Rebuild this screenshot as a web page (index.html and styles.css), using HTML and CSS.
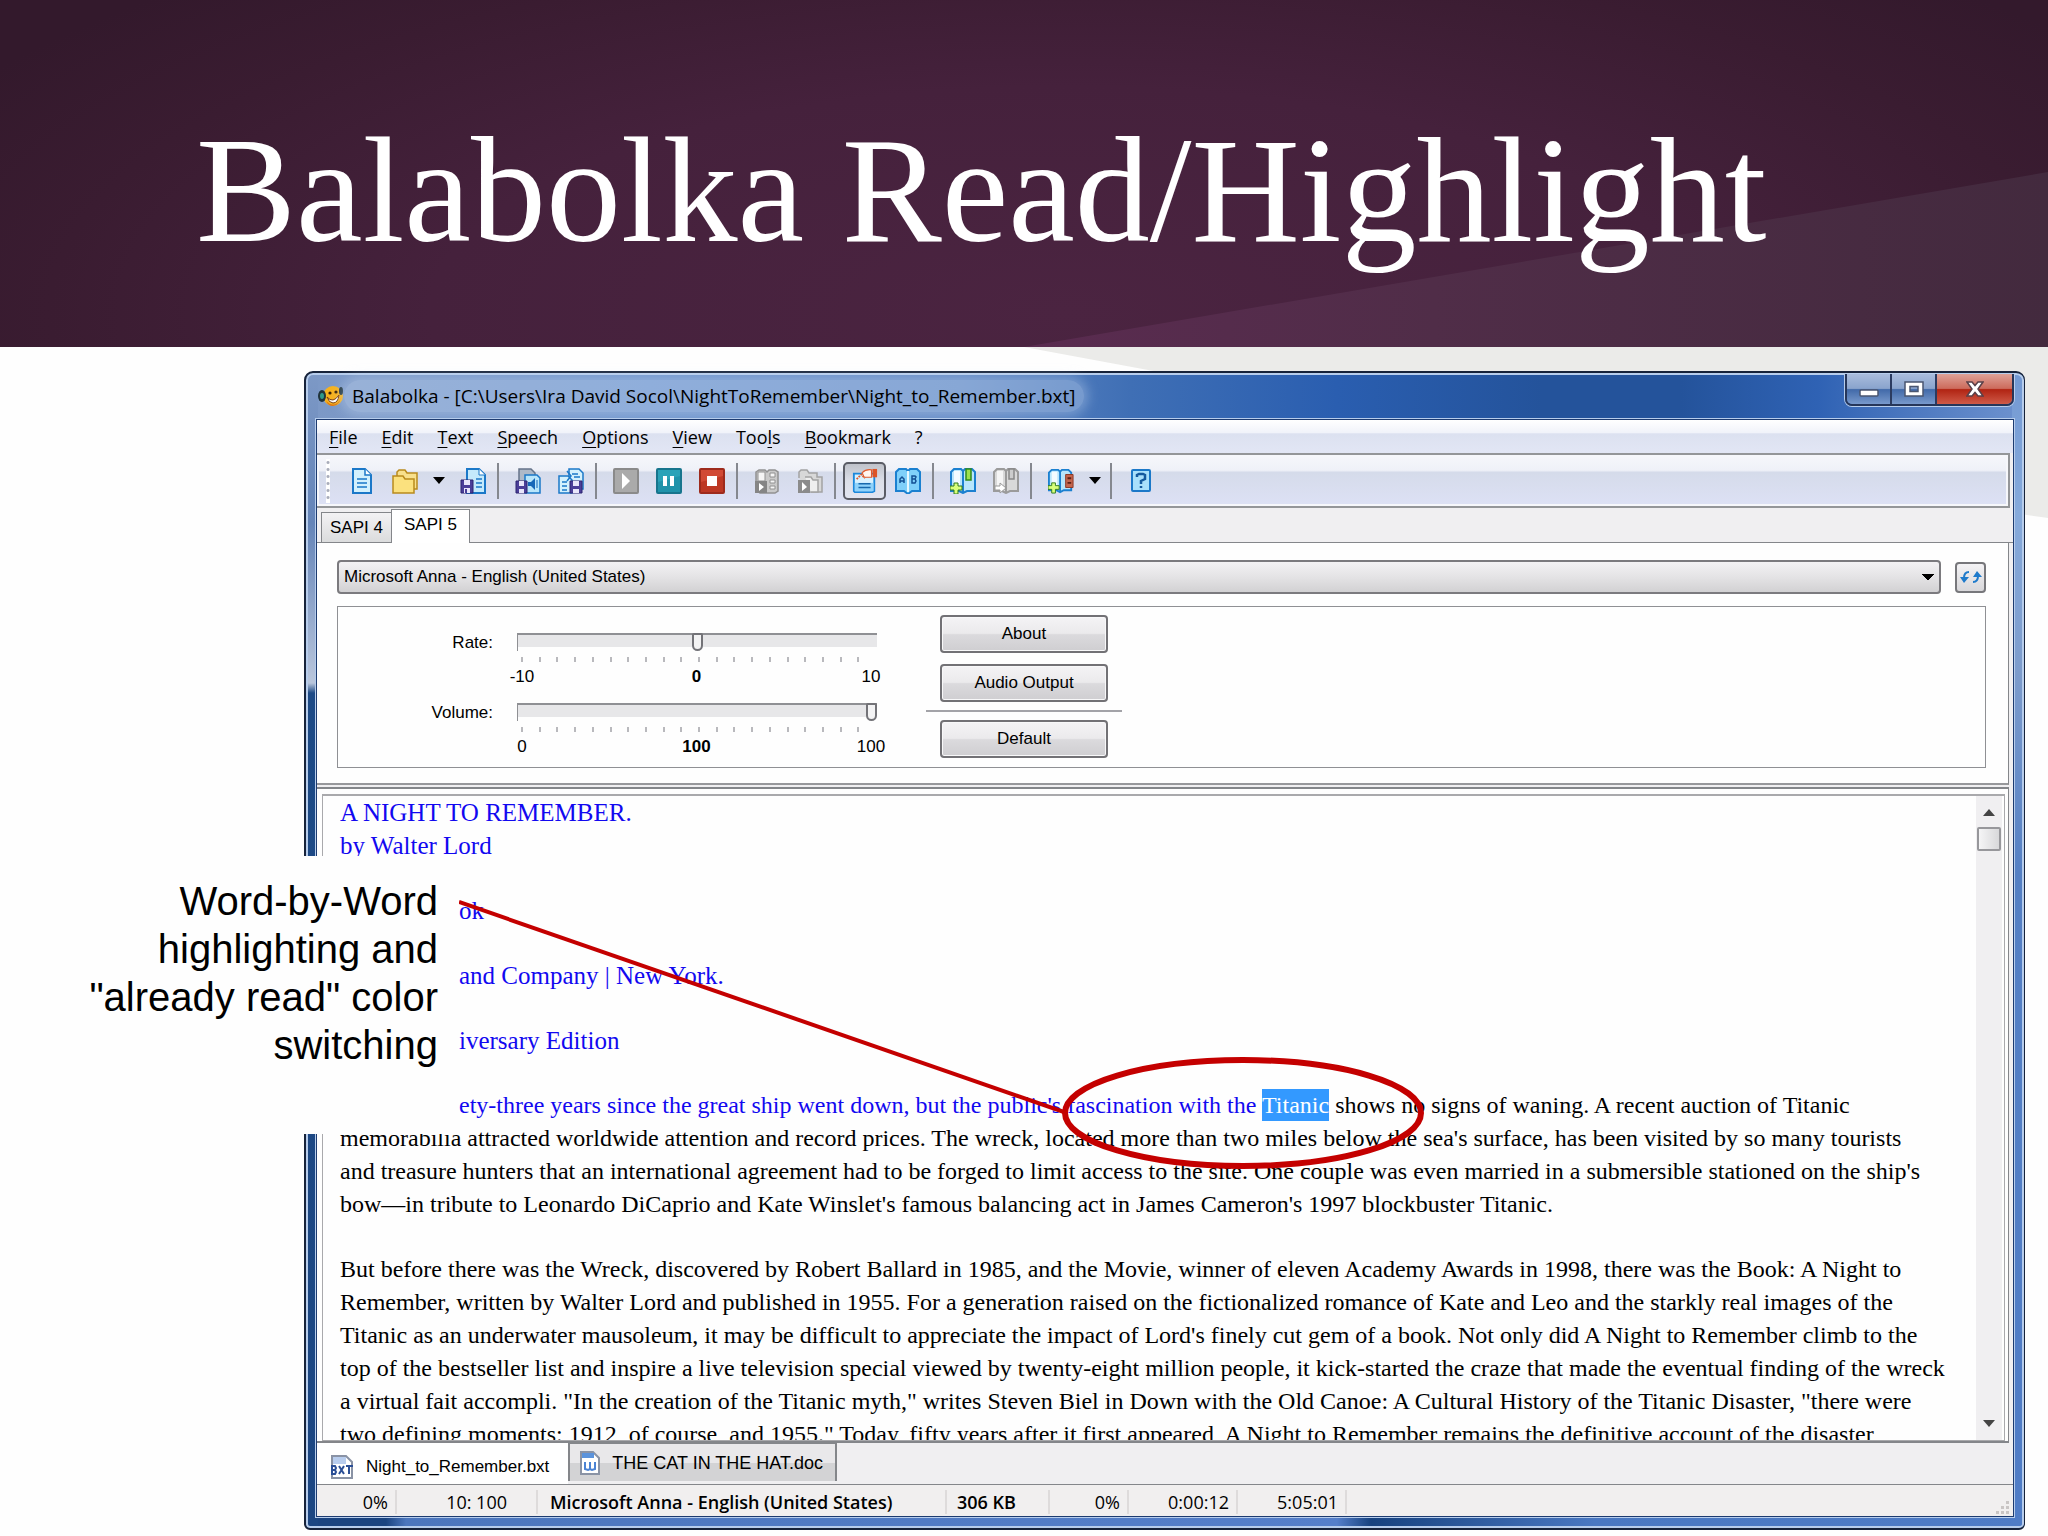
FILE: index.html
```html
<!DOCTYPE html>
<html lang="en">
<head>
<meta charset="utf-8">
<title>Balabolka Read/Highlight</title>
<link rel="stylesheet" href="styles.css">
</head>
<body>
<div class="slide">
  <header class="banner">
    <svg class="banner-wedge" viewBox="0 0 1028 175" preserveAspectRatio="none" aria-hidden="true">
      <defs><linearGradient id="wedge" x1="0" x2="1" y1="0" y2="0"><stop offset="0" stop-color="#5a2b50"/><stop offset=".4" stop-color="#502d48"/><stop offset="1" stop-color="#432a3e"/></linearGradient></defs>
      <path d="M0 175 1028 0V175z" fill="url(#wedge)"/>
    </svg>
    <h1>Balabolka Read/Highlight</h1>
  </header>

  <main class="stage">
    <svg class="stage-wedge" viewBox="0 0 1028 171" preserveAspectRatio="none" aria-hidden="true"><path d="M0 0 130 24 1007 168 1028 171V0z" fill="#ebebe9"/></svg>

    <section class="window">
      <div class="titlebar">
        <svg class="app-icon" viewBox="0 0 26 24" aria-hidden="true">
          <circle cx="15" cy="12" r="10" fill="#f6b21d"/><path d="M8 17q8 8 15-2l1-6q-1 12-9 13-5 0-7-5z" fill="#e07612"/>
          <ellipse cx="4" cy="12" rx="4" ry="6" fill="#20343c"/><ellipse cx="4" cy="12" rx="2" ry="3" fill="#2e9a8a"/>
          <ellipse cx="23" cy="7" rx="2" ry="4" fill="#20343c"/>
          <path d="M9 13q6 7 12-2-1 8-6 8-4 0-6-6z" fill="#fff" stroke="#7a3a08"/><circle cx="12" cy="9" r="1.6" fill="#3b2206"/><circle cx="18" cy="8" r="1.6" fill="#3b2206"/>
        </svg>
        <span class="window-title">Balabolka - [C:\Users\Ira David Socol\NightToRemember\Night_to_Remember.bxt]</span>
        <div class="window-buttons">
          <button class="win-btn minimize" aria-label="Minimize"><svg viewBox="0 0 20 8" width="20" height="8"><rect x="1" y="1" width="18" height="6" rx="1" fill="#fff" stroke="#4a5670" stroke-width="1.5"/></svg></button>
          <button class="win-btn maximize" aria-label="Maximize"><svg viewBox="0 0 20 16" width="20" height="16"><path d="M1 1h18v14H1zM6 5.500v5h8v-5z" fill="#fff" fill-rule="evenodd" stroke="#4a5670" stroke-width="1.500"/></svg></button>
          <button class="win-btn close" aria-label="Close"><svg viewBox="0 0 18 16" width="18" height="16"><path d="M1 1h5l3 3.500L12 1h5l-5 7 5 7h-5l-3-3.500L6 15H1l5-7z" fill="#fff" stroke="#5a4048" stroke-width="1.500"/></svg></button>
        </div>
      </div>

      <div class="client">
        <nav class="menubar">
          <button><u>F</u>ile</button><button><u>E</u>dit</button><button><u>T</u>ext</button><button><u>S</u>peech</button><button><u>O</u>ptions</button><button><u>V</u>iew</button><button>Too<u>l</u>s</button><button><u>B</u>ookmark</button><button>?</button>
        </nav>

        <div class="toolbar">
          <span class="grip"></span>
          <button class="tool" aria-label="New"><svg viewBox="0 0 26 26"><path d="M4 1h12l6 6v18H4z" fill="#d3f1fd" stroke="#1b78c8" stroke-width="2"/><path d="M16 1v6h6" fill="#fff" stroke="#1b78c8" stroke-width="1.500"/><path d="M8 11h10M8 15h10M8 19h10" stroke="#1b78c8" stroke-width="1.500"/></svg></button>
          <button class="tool" aria-label="Open"><svg viewBox="0 0 26 26"><path d="M5 8V4l2-2h6l2 3h10v16h-3" fill="#f8e08c" stroke="#b98a1c" stroke-width="1.500"/><path d="M1 8h10l2 3h9v14H1z" fill="#fbe17e" stroke="#b98a1c" stroke-width="1.500"/></svg></button>
          <button class="drop" aria-label="Recent files"><svg viewBox="0 0 12 7"><path d="M0 0h12L6 7z"/></svg></button>
          <button class="tool" aria-label="Save"><svg viewBox="0 0 26 26"><path d="M7 1h12l6 6v18H7z" fill="#c4eafc" stroke="#1b78c8" stroke-width="2"/><path d="M19 1v6h6" fill="#fff" stroke="#1b78c8"/><path d="M16 11h6M16 15h6M16 19h6" stroke="#1b78c8" stroke-width="1.500"/><path d="M1 12h12v13H1z" fill="#4b3f98" stroke="#2d2470"/><path d="M4 12h6v5H4zM4 20h6v5H4z" fill="#e8e6fa"/><path d="M5 21h2v4H5z" fill="#4b3f98"/></svg></button>
          <span class="sep"></span>
          <button class="tool" aria-label="Save audio"><svg viewBox="0 0 26 26"><path d="M4 1h12l4 4v16H4z" fill="#aeb9c8" stroke="#657389" stroke-width="1.500"/><path d="M10 7h12l3 3v15H10z" fill="#b9e6fb" stroke="#1b78c8" stroke-width="1.500"/><path d="M13 14h3l4-4v12l-4-4h-3z" fill="#1667b8"/><path d="M22 12v8" stroke="#1667b8"/><path d="M1 13h11v12H1z" fill="#4b3f98" stroke="#2d2470"/><path d="M4 13h5v5H4zM4 21h5v4H4z" fill="#e8e6fa"/></svg></button>
          <button class="tool" aria-label="Split and save"><svg viewBox="0 0 26 26"><path d="M11 1h10l4 4v16H11z" fill="#d3f1fd" stroke="#1b78c8" stroke-width="1.500"/><path d="M1 8h9l4 4v13H1z" fill="#d3f1fd" stroke="#1b78c8" stroke-width="1.500"/><path d="M4 14h5M4 18h5M4 22h5M14 6h6M16 9h6M9 3l4 5-4 5" fill="none" stroke="#1b78c8" stroke-width="1.500"/><path d="M12 13h12v12H12z" fill="#4b3f98" stroke="#2d2470"/><path d="M15 13h6v5h-6zM15 21h6v4h-6z" fill="#e8e6fa"/></svg></button>
          <span class="sep"></span>
          <button class="tool" aria-label="Read aloud"><svg viewBox="0 0 26 26"><rect x="1" y="1" width="24" height="24" rx="1" fill="#aaa" stroke="#8a8a8a" stroke-width="2"/><path d="M9 5v16l8-8z" fill="#fff"/></svg></button>
          <button class="tool" aria-label="Pause"><svg viewBox="0 0 26 26"><rect x="1" y="1" width="24" height="24" rx="1" fill="#2ba3b8" stroke="#17758d" stroke-width="2"/><path d="M2 14 24 8v16H2z" fill="#15849c" opacity=".5"/><path d="M7 8h4v10H7zM14 8h4v10h-4z" fill="#fff"/></svg></button>
          <button class="tool" aria-label="Stop"><svg viewBox="0 0 26 26"><rect x="1" y="1" width="24" height="24" rx="1" fill="#d14a35" stroke="#9e2b1c" stroke-width="2"/><path d="M2 14 24 8v16H2z" fill="#a92614" opacity=".5"/><path d="M8 8h10v10H8z" fill="#fff"/></svg></button>
          <span class="sep"></span>
          <button class="tool" aria-label="Read clipboard"><svg viewBox="0 0 26 26"><path d="M2 4l3-2h6l2 2 2-2h6l3 2v19l-3 2H6l-4-3z" fill="#c9c9c9" stroke="#919191" stroke-width="1.500"/><path d="M4 4h7v9H4zM16 5h5v4h-5zM16 12h5v3h-5zM16 18h5v3h-5z" fill="#f5f5f5" stroke="#919191"/><path d="M1 13h12v12H1z" fill="#858585"/><path d="M5 15v8l5-4z" fill="#fff"/></svg></button>
          <button class="tool" aria-label="Batch convert"><svg viewBox="0 0 26 26"><path d="M2 10V4l2-2h6l2 3h8v4h5v15H13" fill="#d8d8d8" stroke="#a3a3a3" stroke-width="1.500"/><path d="M8 9h6l2 3h5v12h-7" fill="#eee" stroke="#a3a3a3" stroke-width="1.500"/><path d="M1 12h12v13H1z" fill="#8b8b8b"/><path d="M5 14v9l5-4z" fill="#fff"/></svg></button>
          <span class="sep"></span>
          <button class="tool pressed" aria-label="Show panel"><svg viewBox="0 0 28 26"><path d="M2 5h22v19l-2 1H3l-1-1z" fill="#d9f2ff" stroke="#1b88dc" stroke-width="2"/><path d="M3 15h20v9H3z" fill="#8fd3fb"/><path d="M7 16h13M7 20h13" stroke="#1769ad" stroke-width="1.500"/><path d="M11 4q4-4 10-3v8h-8z" fill="#fff5ef" stroke="#e05b2d" stroke-width="1.200"/><path d="M22 0h5v9h-5z" fill="#dd5426"/><path d="M5 11l5-5 4 4" fill="none" stroke="#e05b2d" stroke-width="2" stroke-dasharray="2 1"/></svg></button>
          <button class="tool" aria-label="Dictionary"><svg viewBox="0 0 26 26"><path d="M1 4l3-3h7l2 2 2-2h7l3 3v19h-8l-4 3-4-3H1z" fill="#7fd0fa" stroke="#1b80d0" stroke-width="2"/><path d="M13 3v21" stroke="#e7f8ff" stroke-width="2"/><path d="M5 15v-4l2-2 2 2v4M5 13h4M17 8v7h3l1-2-1-2 1-2-1-1zM17 11h3" fill="none" stroke="#134f94" stroke-width="1.500"/></svg></button>
          <span class="sep"></span>
          <button class="tool" aria-label="Add bookmark"><svg viewBox="0 0 26 26"><path d="M1 4l3-3h7l2 2 2-2h7l3 3v19h-8l-4 2-4-2H1z" fill="#b8e6fc" stroke="#1b80d0" stroke-width="2"/><path d="M4 3h6v17H4z" fill="#f2fbff"/><path d="M13 3v21" stroke="#1b80d0" stroke-width="2"/><path d="M16 1h5v11h-5z" fill="#9be04e" stroke="#2f8a1c" stroke-width="1.500"/><path d="M4 15h4v3h4v4H8v4H4v-4H0v-4h4z" fill="#d9ff7a" stroke="#2f7a1c"/></svg></button>
          <button class="tool" aria-label="Go to bookmark"><svg viewBox="0 0 26 26"><path d="M1 4l3-3h7l2 2 2-2h7l3 3v19h-8l-4 2-4-2H1z" fill="#d9d9d9" stroke="#9b9b9b" stroke-width="2"/><path d="M4 3h6v17H4z" fill="#f5f5f5"/><path d="M13 3v21" stroke="#9b9b9b" stroke-width="2"/><path d="M16 1h5v10h-5z" fill="#ccc" stroke="#888" stroke-width="1.500"/><path d="M2 18h5v-3l6 5-6 5v-3H2z" fill="#fff" stroke="#999"/></svg></button>
          <span class="sep"></span>
          <button class="tool" aria-label="Quick bookmarks"><svg viewBox="0 0 28 26"><path d="M1 4l3-3h7l2 2 2-2h7l3 3v19h-8l-4 2-4-2H1z" fill="#b8e6fc" stroke="#1b80d0" stroke-width="2"/><path d="M4 3h6v17H4z" fill="#f2fbff"/><path d="M13 3v21" stroke="#1b80d0" stroke-width="2"/><path d="M19 6h8v14h-8z" fill="#c4664e" stroke="#8a3522"/><path d="M21 10h4M21 15h4" stroke="#5d2115" stroke-width="2"/><path d="M4 15h4v3h4v4H8v4H4v-4H0v-4h4z" fill="#d9ff7a" stroke="#2f7a1c"/></svg></button>
          <button class="drop" aria-label="Bookmark list"><svg viewBox="0 0 12 7"><path d="M0 0h12L6 7z"/></svg></button>
          <span class="sep"></span>
          <button class="tool" aria-label="Help"><svg viewBox="0 0 26 26"><rect x="4" y="2" width="18" height="21" rx="1" fill="#a9e0fb" stroke="#1b78c8" stroke-width="2"/><path d="M9 9V7l2-1h4l2 1v4l-4 2v3M13 18v2" fill="none" stroke="#155a9e" stroke-width="2.500"/></svg></button>
        </div>

        <div class="engine-tabs" role="tablist">
          <button class="engine-tab" role="tab">SAPI 4</button><button class="engine-tab active" role="tab" aria-selected="true">SAPI 5</button>
        </div>

        <div class="voice-panel">
          <div class="voice-row">
            <select class="voice-select" aria-label="Voice"><option>Microsoft Anna - English (United States)</option></select>
            <button class="refresh" aria-label="Refresh voices"><svg viewBox="0 0 22 14" width="22" height="14"><path d="M9 2Q4 2 4 8M13 12q5 0 5-6" fill="none" stroke="#1e7acb" stroke-width="2"/><path d="M0 7h9l-5 6zM13 7h9l-5-6z" fill="#1e7acb"/></svg></button>
          </div>
          <div class="settings">
            <div class="sliders">
              <label for="rate">Rate:</label>
              <div class="slider"><input id="rate" type="range" min="-10" max="10" value="0"><div class="ticks"></div>
                <div class="scale"><span>-10</span><b>0</b><span>10</span></div></div>
              <label for="volume">Volume:</label>
              <div class="slider"><input id="volume" type="range" min="0" max="100" value="100"><div class="ticks"></div>
                <div class="scale"><span>0</span><b>100</b><span>100</span></div></div>
            </div>
            <div class="actions">
              <button class="push">About</button><button class="push">Audio Output</button><hr><button class="push">Default</button>
            </div>
          </div>
        </div>

        <div class="editor-frame">
          <div class="editor">
            <div class="text">
              <p class="read">A NIGHT TO REMEMBER.<br>by Walter Lord</p>
              <p class="read inset">ok</p>
              <p class="read inset">and Company | New York.</p>
              <p class="read inset">iversary Edition</p>
              <p class="prose"><span class="read inset">ety-three years since the great ship went down, but the public's fascination with the </span><mark>Titanic</mark> shows no signs of waning. A recent auction of Titanic<br>memorabilia attracted worldwide attention and record prices. The wreck, located more than two miles below the sea's surface, has been visited by so many tourists<br>and treasure hunters that an international agreement had to be forged to limit access to the site. One couple was even married in a submersible stationed on the ship's<br>bow—in tribute to Leonardo DiCaprio and Kate Winslet's famous balancing act in James Cameron's 1997 blockbuster Titanic.</p>
              <p class="prose">But before there was the Wreck, discovered by Robert Ballard in 1985, and the Movie, winner of eleven Academy Awards in 1998, there was the Book: A Night to<br>Remember, written by Walter Lord and published in 1955. For a generation raised on the fictionalized romance of Kate and Leo and the starkly real images of the<br>Titanic as an underwater mausoleum, it may be difficult to appreciate the impact of Lord's finely cut gem of a book. Not only did A Night to Remember climb to the<br>top of the bestseller list and inspire a live television special viewed by twenty-eight million people, it kick-started the craze that made the eventual finding of the wreck<br>a virtual fait accompli. "In the creation of the Titanic myth," writes Steven Biel in Down with the Old Canoe: A Cultural History of the Titanic Disaster, "there were<br>two defining moments: 1912, of course, and 1955." Today, fifty years after it first appeared, A Night to Remember remains the definitive account of the disaster</p>
            </div>
            <div class="scrollbar">
              <svg viewBox="0 0 12 7" width="12" height="7"><path d="M0 7h12L6 0z" fill="#444"/></svg>
              <span class="thumb"></span>
              <svg viewBox="0 0 12 7" width="12" height="7"><path d="M0 0h12L6 7z" fill="#444"/></svg>
            </div>
          </div>
        </div>

        <div class="doc-tabs" role="tablist">
          <button class="doc-tab active" role="tab" aria-selected="true"><svg viewBox="0 0 24 24" width="24" height="24"><path d="M2 1h14l6 6v16H2z" fill="#fff" stroke="#8a93a5" stroke-width="2"/><path d="M3 2h13v7H3z" fill="#b8cdee"/><path d="M2 11v8h3l1-2-1-2 1-2-1-2zM2 15h4M9 11l5 8M14 11l-5 8M16 11h7M19 11v8" fill="none" stroke="#2b4f96" stroke-width="2"/></svg>Night_to_Remember.bxt</button>
          <button class="doc-tab" role="tab"><svg viewBox="0 0 20 24" width="20" height="24"><path d="M1 1h12l6 6v16H1z" fill="#fff" stroke="#8a93a5" stroke-width="2"/><path d="M2 2h12v5H2z" fill="#5b93dc"/><path d="M5 11v7l3 1 2-1 2 1 3-1v-7M10 11v7" fill="none" stroke="#4b83d4" stroke-width="2"/></svg>THE CAT IN THE HAT.doc</button>
        </div>

        <footer class="status">
          <span class="cell percent">0%</span><span class="cell caret">10: 100</span><span class="cell voice">Microsoft Anna - English (United States)</span><span class="cell size">306 KB</span><span class="cell progress">0%</span><span class="cell time">0:00:12</span><span class="cell time">5:05:01</span>
          <svg class="resize" viewBox="0 0 14 14" width="14" height="14"><path d="M10 0h3v3h-3zM5 5h3v3H5zM10 5h3v3h-3zM0 10h3v3H0zM5 10h3v3H5zM10 10h3v3h-3z" fill="#c9c5c4"/></svg>
        </footer>
      </div>
    </section>

    <aside class="callout">Word-by-Word highlighting and "already read" color switching</aside>
    <svg class="pointer" viewBox="0 0 970 280" aria-hidden="true"><path d="M0 12 605 222" stroke="#c40000" stroke-width="4"/><ellipse cx="784" cy="223" rx="178" ry="53" fill="none" stroke="#c40000" stroke-width="6"/></svg>
  </main>
</div>
</body>
</html>
```
FILE: styles.css
```css
* { box-sizing: border-box; }
body { margin: 0; background: #fefefe; color: #000; }
button, select, input { font: inherit; color: inherit; margin: 0; padding: 0; border: 0; background: none; }
svg { display: block; flex: none; }

.slide { height: 100vh; min-height: 1200px; display: flex; flex-direction: column; overflow: hidden; }

.banner {
  position: relative;
  flex: none;
  height: 347px;
  padding: 106px 196px 0;
  background: radial-gradient(ellipse 62% 130% at 52% 90%, #4b2441 0%, #45213c 50%, #3a1c31 80%, #33192c 100%);
}
.banner-wedge { position: absolute; right: 0; bottom: 0; width: 50%; height: 175px; }
.banner h1 {
  position: relative;
  margin: 0;
  font: 400 150px/168px "Liberation Serif", serif;
  color: #fff;
  white-space: nowrap;
}

.stage { position: relative; flex: 1; min-height: 0; display: flex; padding: 24px 23px 6px 304px; }
.stage-wedge { position: absolute; top: 0; right: 0; width: 50%; height: 171px; }

/* application window */
.window {
  position: relative;
  flex: 1;
  min-width: 0;
  display: flex;
  flex-direction: column;
  padding: 1px 10px 11px;
  border: 2px solid #17233a;
  border-right-width: 1px;
  border-radius: 9px 9px 6px 6px;
  background:
    linear-gradient(#7d99c6 0, #6484b8 150px, #b9c6dc 310px, #1d4a86 320px, #1c4682 100%) left / 12px 100% no-repeat,
    linear-gradient(#7399d3 0, #86aadb 140px, #7d9ccc 300px, #5580c4 500px, #4f7cc6 100%) right / 12px 100% no-repeat,
    linear-gradient(90deg, #1b4480 80px, #4c76bd 100px, #557fca 60%, #17427f 62%, #4a78c2 75%, #4f7cc6 100%) bottom / 100% 12px no-repeat,
    linear-gradient(90deg, #7d99c6 0, #6e94cc 20%, #6289c4 38%, #3f6fb5 48%, #2a5eb0 60%, #24539b 72%, #24539b 80%, #2f62b4 88%, #6f93cf 100%);
  box-shadow: inset 0 0 0 2px #b7cdec;
  font: 17px/20px "Liberation Sans", sans-serif;
}
.titlebar { flex: none; display: flex; align-items: flex-start; height: 45px; }
.app-icon { width: 26px; height: 24px; margin: 10px 0 0 2px; }
.window-title {
  margin: 6px 0 0;
  padding: 4px 8px;
  font: 19px/24px "Open Sans", sans-serif;
  white-space: nowrap;
  border-radius: 16px;
  background: rgba(205, 224, 245, .35);
  box-shadow: 0 0 12px 4px rgba(205, 224, 245, .35);
}
.window-buttons { display: flex; margin-left: auto; height: 32px; border: 2px solid #26365a; border-top: 0; border-radius: 0 0 7px 7px; overflow: hidden; box-shadow: 0 0 0 1px #b7cdec; }
.win-btn { display: grid; place-items: center; width: 45px; border-right: 2px solid #2b3b60; background: linear-gradient(#a9bcdc 0, #8aa4cd 48%, #426aa9 52%, #7899cc 100%); }
.win-btn.minimize svg { margin-top: 8px; }
.win-btn.close { width: 75px; border: 0; background: linear-gradient(#dfa298 0, #cd6b5c 48%, #b12413 52%, #cf5a48 100%); }

.client { flex: 1; min-height: 0; display: flex; flex-direction: column; border: 1px solid #1d3b70; background: #f0eff1; box-shadow: 0 0 0 1px #b7cdec; }

.menubar { flex: none; display: flex; align-items: center; gap: 24px; height: 33px; padding: 0 12px; background: linear-gradient(#fff 0, #f1f3fa 38%, #dce1f0 42%, #e2e6f5 100%); font: 18px/24px "Open Sans", sans-serif; }
.menubar u { text-underline-offset: 3px; }

.toolbar { flex: none; display: flex; align-items: center; height: 55px; margin-right: 3px; border: 2px solid #949699; border-left: 0; background: linear-gradient(#f6f7fb 0, #eff1f8 30%, #d5dbea 34%, #dde1f5 100%); box-shadow: inset 0 0 0 2px #f6f7fb; }
.grip { width: 4px; height: 44px; margin: 0 10px 0 9px; background: radial-gradient(circle, #a9adba 1px, #fff 2px) 0 0 / 4px 7px; }
.tool { display: grid; place-items: center; width: 43px; height: 38px; }
.tool svg { width: 26px; height: 26px; }
.tool.pressed { border: 2px solid #5b5d66; border-radius: 5px; background: linear-gradient(#bfc2ca, #dcdfe8 50%, #e2e5f0); }
.drop { display: grid; place-items: center; width: 25px; height: 38px; }
.drop svg { width: 12px; height: 7px; }
.sep { width: 2px; height: 36px; margin: 0 7px 0 3px; background: #85888f; }

.engine-tabs { flex: none; display: flex; align-items: flex-end; height: 35px; padding-left: 4px; border-bottom: 1px solid #84868a; }
.engine-tab { width: 71px; height: 30px; padding-top: 1px; border: 1px solid #84868a; border-bottom: 0; background: linear-gradient(#f3f2f4, #dbdcdd); }
.engine-tab.active { width: 79px; height: 34px; margin: 0 0 -1px -1px; padding: 0 0 3px; background: #fff; }

.voice-panel { flex: none; padding: 17px 22px 15px 20px; margin-right: 4px; border-right: 1px solid #84868a; border-bottom: 2px solid #97989b; background: #fefefe; }
.voice-row { display: flex; align-items: center; gap: 14px; }
.voice-select {
  flex: 1;
  height: 34px;
  padding-left: 5px;
  appearance: none;
  border: 2px solid #7b7a7e;
  border-radius: 4px;
  background:
    linear-gradient(to bottom right, #000 50%, transparent 50%) right 5px center / 6px 7px no-repeat,
    linear-gradient(to bottom left, #000 50%, transparent 50%) right 11px center / 6px 7px no-repeat,
    linear-gradient(#f3f2f4, #e4e3e5 50%, #d2d1d3);
}
.refresh { display: grid; place-items: center; width: 31px; height: 31px; border: 2px solid #77777b; border-radius: 4px; background: linear-gradient(#f4f3f5, #d8d7da); }
.settings { display: flex; align-items: flex-start; gap: 43px; height: 162px; margin-top: 12px; border: 1px solid #8f9094; padding: 8px 0 0 88px; }
.sliders { display: grid; grid-template-columns: 67px 374px; column-gap: 16px; padding-top: 18px; row-gap: 17px; }
.sliders label { text-align: right; }
.slider { height: 53px; }
.slider input { display: block; width: 360px; height: 18px; margin-left: 8px; appearance: none; background: linear-gradient(#8f9094 0, #8f9094 2px, #e7e7e9 2px) top / 100% 14px no-repeat; border-left: 1px solid #8f9094; }
.slider input::-webkit-slider-thumb { appearance: none; width: 11px; height: 18px; border: 2px solid #737378; border-radius: 2px 2px 6px 6px; background: #f3f3f4; }
.ticks { width: 354px; height: 5px; margin: 6px 0 0 12px; background: repeating-linear-gradient(90deg, #b9b9bd 0 2px, transparent 2px 5%); }
.scale { display: grid; grid-template-columns: 50px 1fr 50px; width: 399px; margin: 5px 0 0 -12px; text-align: center; }
.actions { display: flex; flex-direction: column; align-items: center; width: 196px; }
.push { width: 168px; height: 38px; margin-bottom: 11px; border: 2px solid #727175; border-radius: 4px; background: linear-gradient(#f4f3f5 0, #ebeaec 48%, #dbdadd 52%, #cfced1 100%); box-shadow: inset 0 0 0 1px #f8f8f9; }
.actions hr { width: 196px; margin: -3px 0 8px; border: 0; border-top: 2px solid #a3a3a8; }

.editor-frame { flex: 1; min-height: 0; display: flex; margin: 2px 4px 0 0; padding: 5px 3px 0 5px; border: solid #84868a; border-width: 2px 1px 2px 0; background: #fefefe; }
.editor { flex: 1; min-width: 0; display: flex; border: 1px solid #a9a9ac; border-width: 2px 1px 1px; overflow: hidden; }
.text { flex: 1; min-width: 0; overflow: hidden; padding-left: 17px; font: 25px/33px "Liberation Serif", serif; white-space: nowrap; }
.text p { margin: 0 0 32px; }
.text .prose { font-size: 24px; }
.read { color: #1208f0; }
.text .inset { padding-left: 119px; }
.text mark { padding: 3px 0; background: #3399ff; color: #fff; }
.scrollbar { flex: none; display: flex; flex-direction: column; align-items: center; width: 26px; margin-right: 2px; padding: 13px 0; background: #f0eff1; }
.scrollbar .thumb { width: 24px; height: 24px; margin: 11px 0 auto; border: 2px solid #97979b; border-radius: 2px; background: linear-gradient(90deg, #f5f5f6, #d8d8da); }

.doc-tabs { flex: none; display: flex; align-items: flex-start; height: 42px; border-bottom: 1px solid #84868a; }
.doc-tab { display: flex; align-items: center; gap: 12px; height: 38px; padding: 0 12px 0 10px; border: 2px solid #84868a; border-top-width: 1px; border-bottom: 0; background: linear-gradient(#e9e8ea 50%, #d3d3d5 52%); font-size: 18px; white-space: nowrap; }
.doc-tab.active { height: 41px; padding: 6px 19px 0 13px; border: 0; background: #fff; font-size: 17px; }

.status { flex: none; display: flex; align-items: center; height: 31px; padding-top: 2px; background: #f1efef; font: 18px/24px "Open Sans", sans-serif; }
.cell { flex: none; padding: 0 7px; border-right: 2px solid #dedbdb; text-align: right; white-space: nowrap; }
.percent { width: 80px; }
.caret { width: 141px; padding-right: 29px; }
.voice { width: 409px; padding-left: 12px; text-align: left; font-weight: 600; }
.size { width: 103px; padding-left: 10px; text-align: left; font-weight: 600; }
.progress { width: 79px; }
.time { width: 109px; }
.resize { margin: 12px 3px 0 auto; }

/* slide annotations lying over the window */
.callout { position: absolute; left: 60px; top: 509px; width: 399px; height: 278px; padding: 21px 21px 0; background: #fefefe; font: 40px/48px "Liberation Sans", sans-serif; text-align: right; }
.pointer { position: absolute; left: 459px; top: 543px; width: 970px; height: 280px; }
```
